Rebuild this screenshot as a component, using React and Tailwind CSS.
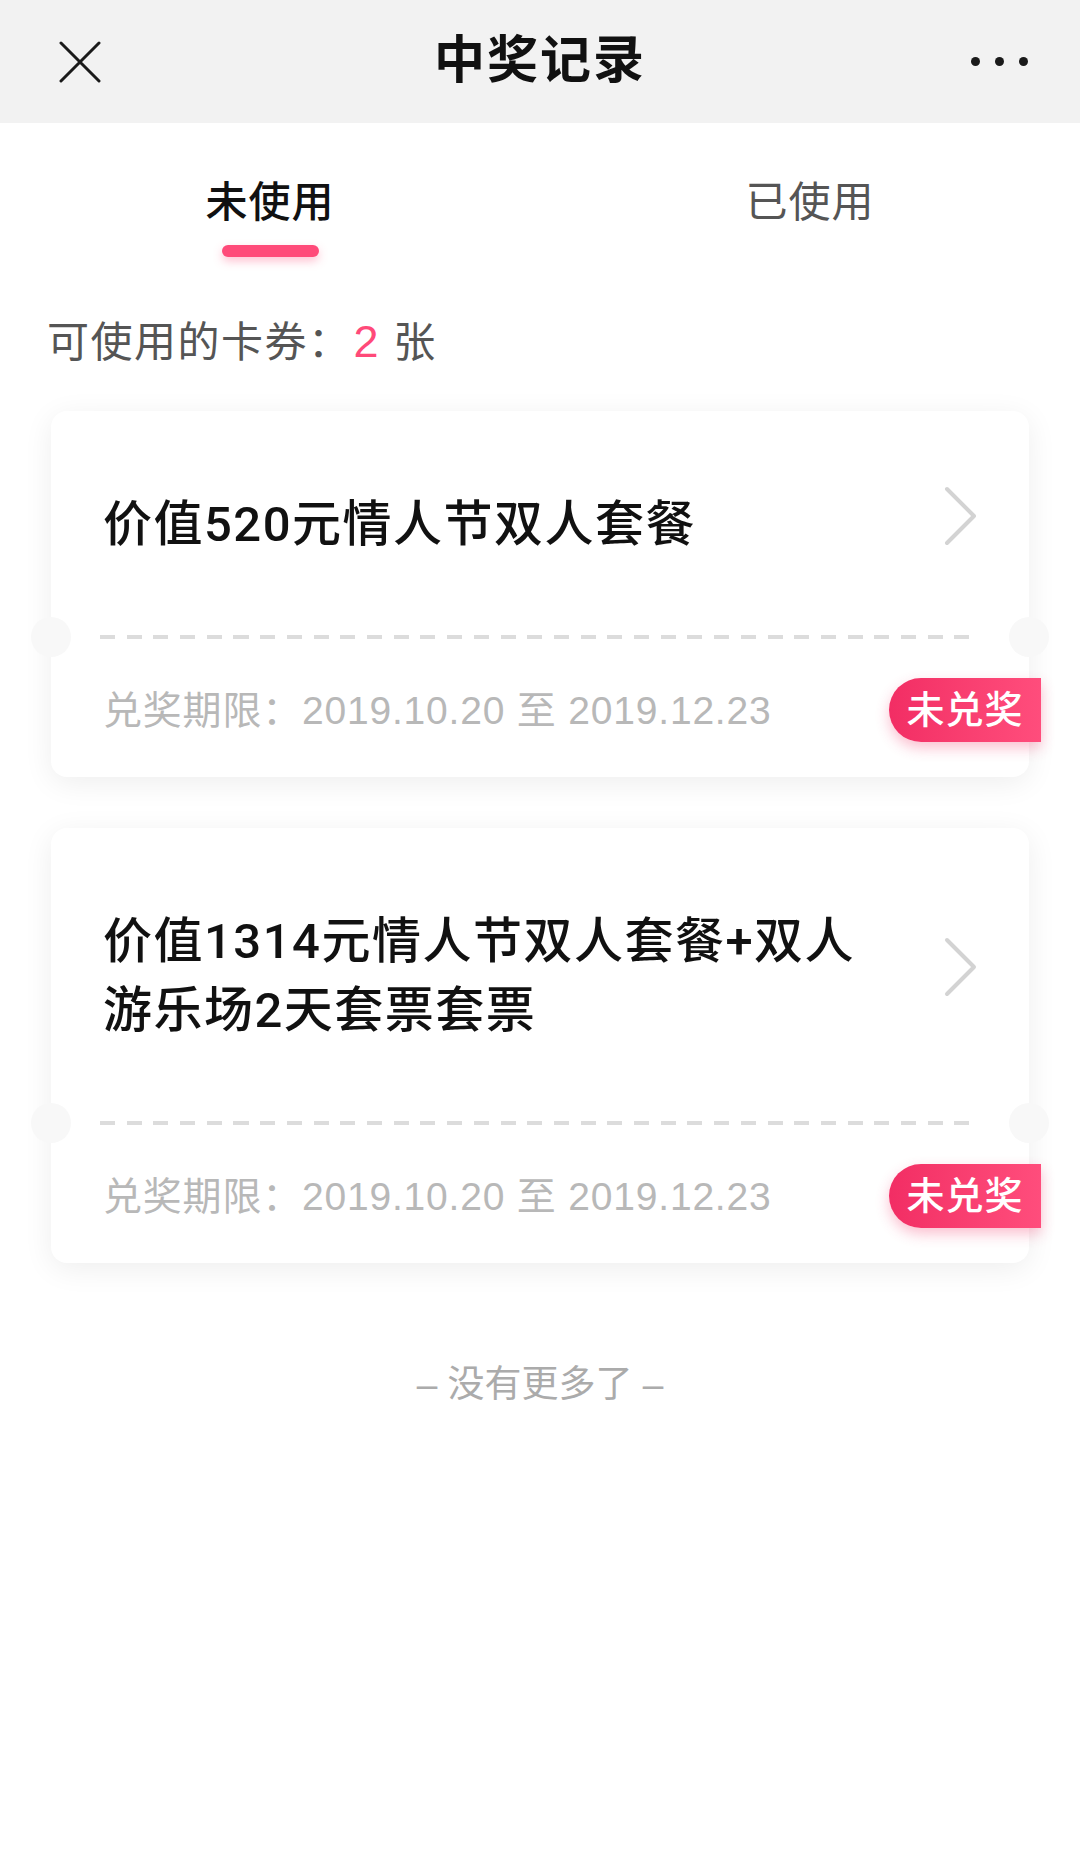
const coupons = [
  { id: 1, title: '价值520元情人节双人套餐', start: '2019.10.20', end: '2019.12.23' },
  { id: 2, title: '价值1314元情人节双人套餐+双人游乐场2天套票套票', start: '2019.10.20', end: '2019.12.23' },
];

const font = { fontFamily: '"Liberation Sans", "Noto Sans CJK SC", sans-serif' };
const titleFont = { fontFamily: 'Roboto, "Noto Sans CJK SC", sans-serif' };

const CloseIcon = () => (
  <svg width="42" height="42" viewBox="0 0 42 42" fill="none">
    <path d="M2 2L40 40M40 2L2 40" stroke="#1a1a1a" strokeWidth="3" strokeLinecap="round" />
  </svg>
);

const Chevron = () => (
  <svg width="34" height="60" viewBox="0 0 34 60" fill="none" className="shrink-0">
    <path d="M3 3L30 30L3 57" stroke="#d3d3d3" strokeWidth="4" strokeLinecap="round" strokeLinejoin="round" />
  </svg>
);

const CouponCard = ({ coupon }) => (
  <div className="relative mx-[51px] rounded-[16px] bg-white shadow-[0_6px_30px_rgba(0,0,0,0.07)]">
    <div className="flex items-center pl-[52px] pr-[51px] pt-[79px] pb-[76px]">
      <p className="w-[775px] text-[49px] leading-[69px] font-medium tracking-[1.5px] text-[#111]" style={titleFont}>
        {coupon.title}
      </p>
      <div className="ml-auto mb-[18px] flex h-0 w-[34px] items-center">
        <Chevron />
      </div>
    </div>
    <div className="relative h-[4px]">
      <div className="mx-[49px] h-[4px] bg-[repeating-linear-gradient(to_right,#dcdcdc_0,#dcdcdc_15px,transparent_15px,transparent_26.7px)]" />
      <div className="absolute left-[-20px] top-[-18px] h-[40px] w-[40px] rounded-full bg-[#f8f8f8]" />
      <div className="absolute right-[-20px] top-[-18px] h-[40px] w-[40px] rounded-full bg-[#f8f8f8]" />
    </div>
    <div className="relative pl-[52px] pt-[46px] pb-[40px]">
      <p className="text-[39px] leading-[52px] tracking-[0.8px] text-[#b8b8b8]">
        兑奖期限：{coupon.start} 至 {coupon.end}
      </p>
      <div className="absolute right-[-12px] top-[39px] flex h-[64px] w-[152px] items-center justify-center rounded-l-full rounded-r-[8px] bg-gradient-to-r from-[#f22d64] to-[#ff4d7c] text-[38px] font-medium tracking-[1px] text-white shadow-[0_6px_14px_rgba(242,45,100,0.3)]">
        未兑奖
      </div>
    </div>
  </div>
);

const App = () => {
  return (
    <div className="min-h-[1856px] bg-white" style={font}>
      <div className="flex h-[123px] items-center bg-[#f2f2f2]">
        <div className="flex w-[160px] pl-[59px]">
          <CloseIcon />
        </div>
        <h1 className="flex-1 text-center text-[51px] font-semibold tracking-[2px] text-[#111]">中奖记录</h1>
        <div className="flex w-[160px] justify-end gap-[15px] pr-[52px]">
          <span className="h-[9px] w-[9px] rounded-full bg-[#1a1a1a]" />
          <span className="h-[9px] w-[9px] rounded-full bg-[#1a1a1a]" />
          <span className="h-[9px] w-[9px] rounded-full bg-[#1a1a1a]" />
        </div>
      </div>

      <div className="grid grid-cols-2 pt-[52px]">
        <div className="flex flex-col items-center">
          <span className="text-[42px] leading-[56px] font-medium tracking-[1px] text-[#111]">未使用</span>
          <span className="mt-[14px] h-[12px] w-[97px] rounded-full bg-[#ff4a79] shadow-[0_4px_10px_rgba(255,74,121,0.35)]" />
        </div>
        <div className="flex flex-col items-center">
          <span className="text-[42px] leading-[56px] tracking-[1px] text-[#555]">已使用</span>
        </div>
      </div>

      <p className="mt-[57px] pl-[47px] text-[42px] leading-[56px] tracking-[1.5px] text-[#555]">
        可使用的卡券：<span className="ml-[2px] text-[45px] text-[#ff4a79]">2</span> 张
      </p>

      <div className="mt-[40px] flex flex-col gap-[51px]">
        {coupons.map((c) => (
          <CouponCard key={c.id} coupon={c} />
        ))}
      </div>

      <p className="mt-[97px] text-center text-[37px] leading-[50px] text-[#ababab]">– 没有更多了 –</p>
    </div>
  );
};

export default App;
